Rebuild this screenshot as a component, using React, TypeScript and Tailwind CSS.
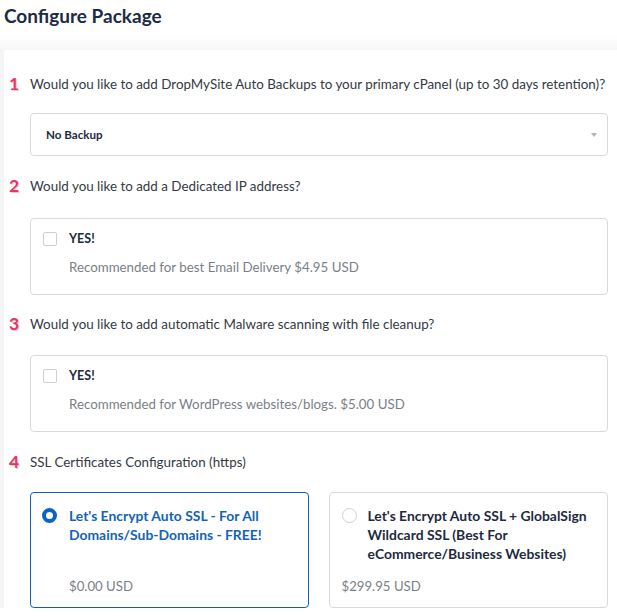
import React from "react";

const Num = ({ n }: { n: string }) => (
  <span className="w-[17px] shrink-0 text-[17.5px] font-bold leading-none text-[#e8336b] [text-shadow:1px_1px_1px_rgba(0,0,0,0.2)]">
    {n}
  </span>
);

const Q = ({ n, text }: { n: string; text: string }) => (
  <div className="flex h-[18px] items-center pl-[5px] text-[13.4px] leading-[18px] text-[#333a44]">
    <Num n={n} />
    <span className="ml-[4px]">{text}</span>
  </div>
);

const CheckBox = ({ sub }: { sub: string }) => (
  <div className="ml-[26px] mr-[9px] h-[77px] rounded-[4px] border border-[#d9d9d9] bg-white pl-[12px] pt-[13px]">
    <div className="flex h-[14px] items-center">
      <div className="h-[14px] w-[14px] rounded-[2px] border border-[#cfcfcf] bg-white" />
      <span className="ml-[12px] text-[12.5px] font-bold leading-[14px] text-[#1d2a3f]">YES!</span>
    </div>
    <div className="ml-[26px] mt-[13px] text-[13.3px] leading-[16px] text-[#7a7f87]">{sub}</div>
  </div>
);

export default function App() {
  return (
    <div
      className="h-[616px] w-[617px] overflow-hidden bg-white"
      style={{ fontFamily: "Lato, 'Noto Sans', sans-serif" }}
    >
      <h1 className="pl-[4px] pt-[4px] text-[19px] font-bold leading-[24px] text-[#1c2b45]">
        Configure Package
      </h1>
      <div className="mt-[8px] h-[14px] bg-gradient-to-b from-white to-[#f6f6f6]" />
      <div className="flex">
        <div className="w-[4px] bg-[#f5f5f5]" />
        <div className="flex-1 bg-white pt-[25px]">
          <Q n="1" text="Would you like to add DropMySite Auto Backups to your primary cPanel (up to 30 days retention)?" />
          <div className="ml-[26px] mr-[9px] mt-[20px] flex h-[43px] items-center justify-between rounded-[4px] border border-[#d9d9d9] bg-white pl-[15px] pr-[10px]">
            <span className="text-[11.6px] font-bold text-[#1d2a3f]">No Backup</span>
            <span className="h-0 w-0 border-x-[3px] border-t-[4px] border-x-transparent border-t-[#b5b5b5]" />
          </div>
          <div className="mt-[21px]">
            <Q n="2" text="Would you like to add a Dedicated IP address?" />
          </div>
          <div className="mt-[23px]">
            <CheckBox sub="Recommended for best Email Delivery $4.95 USD" />
          </div>
          <div className="mt-[20px]">
            <Q n="3" text="Would you like to add automatic Malware scanning with file cleanup?" />
          </div>
          <div className="mt-[22px]">
            <CheckBox sub="Recommended for WordPress websites/blogs. $5.00 USD" />
          </div>
          <div className="mt-[21px]">
            <Q n="4" text="SSL Certificates Configuration (https)" />
          </div>
          <div className="mr-[9px] mt-[21px] flex gap-[20px] pl-[26px]">
            <div className="flex h-[116px] flex-1 flex-col rounded-[4px] border border-[#1060b8] bg-white pl-[11px] pt-[13px]">
              <div className="flex">
                <div className="mt-[2px] h-[15px] w-[15px] shrink-0 rounded-full border-[4px] border-[#0c64c0] bg-white" />
                <div className="ml-[12px] pr-[20px] text-[13.9px] font-bold leading-[19px] text-[#1463b6]">
                  Let's Encrypt Auto SSL - For All Domains/Sub-Domains - FREE!
                </div>
              </div>
              <div className="mb-[13px] ml-[27px] mt-auto text-[13.2px] leading-[16px] text-[#7a7f87]">$0.00 USD</div>
            </div>
            <div className="flex h-[116px] flex-1 flex-col rounded-[4px] border border-[#d9d9d9] bg-white pl-[12px] pt-[13px]">
              <div className="flex">
                <div className="mt-[2px] h-[15px] w-[15px] shrink-0 rounded-full border border-[#d0d0d0] bg-white" />
                <div className="ml-[11px] pr-[6px] text-[13.9px] font-bold leading-[19px] text-[#1d2a3f]">
                  Let's Encrypt Auto SSL + GlobalSign Wildcard SSL (Best For eCommerce/Business Websites)
                </div>
              </div>
              <div className="mb-[13px] ml-[0px] mt-auto text-[13.2px] leading-[16px] text-[#7a7f87]">$299.95 USD</div>
            </div>
          </div>
        </div>
      </div>
    </div>
  );
}
